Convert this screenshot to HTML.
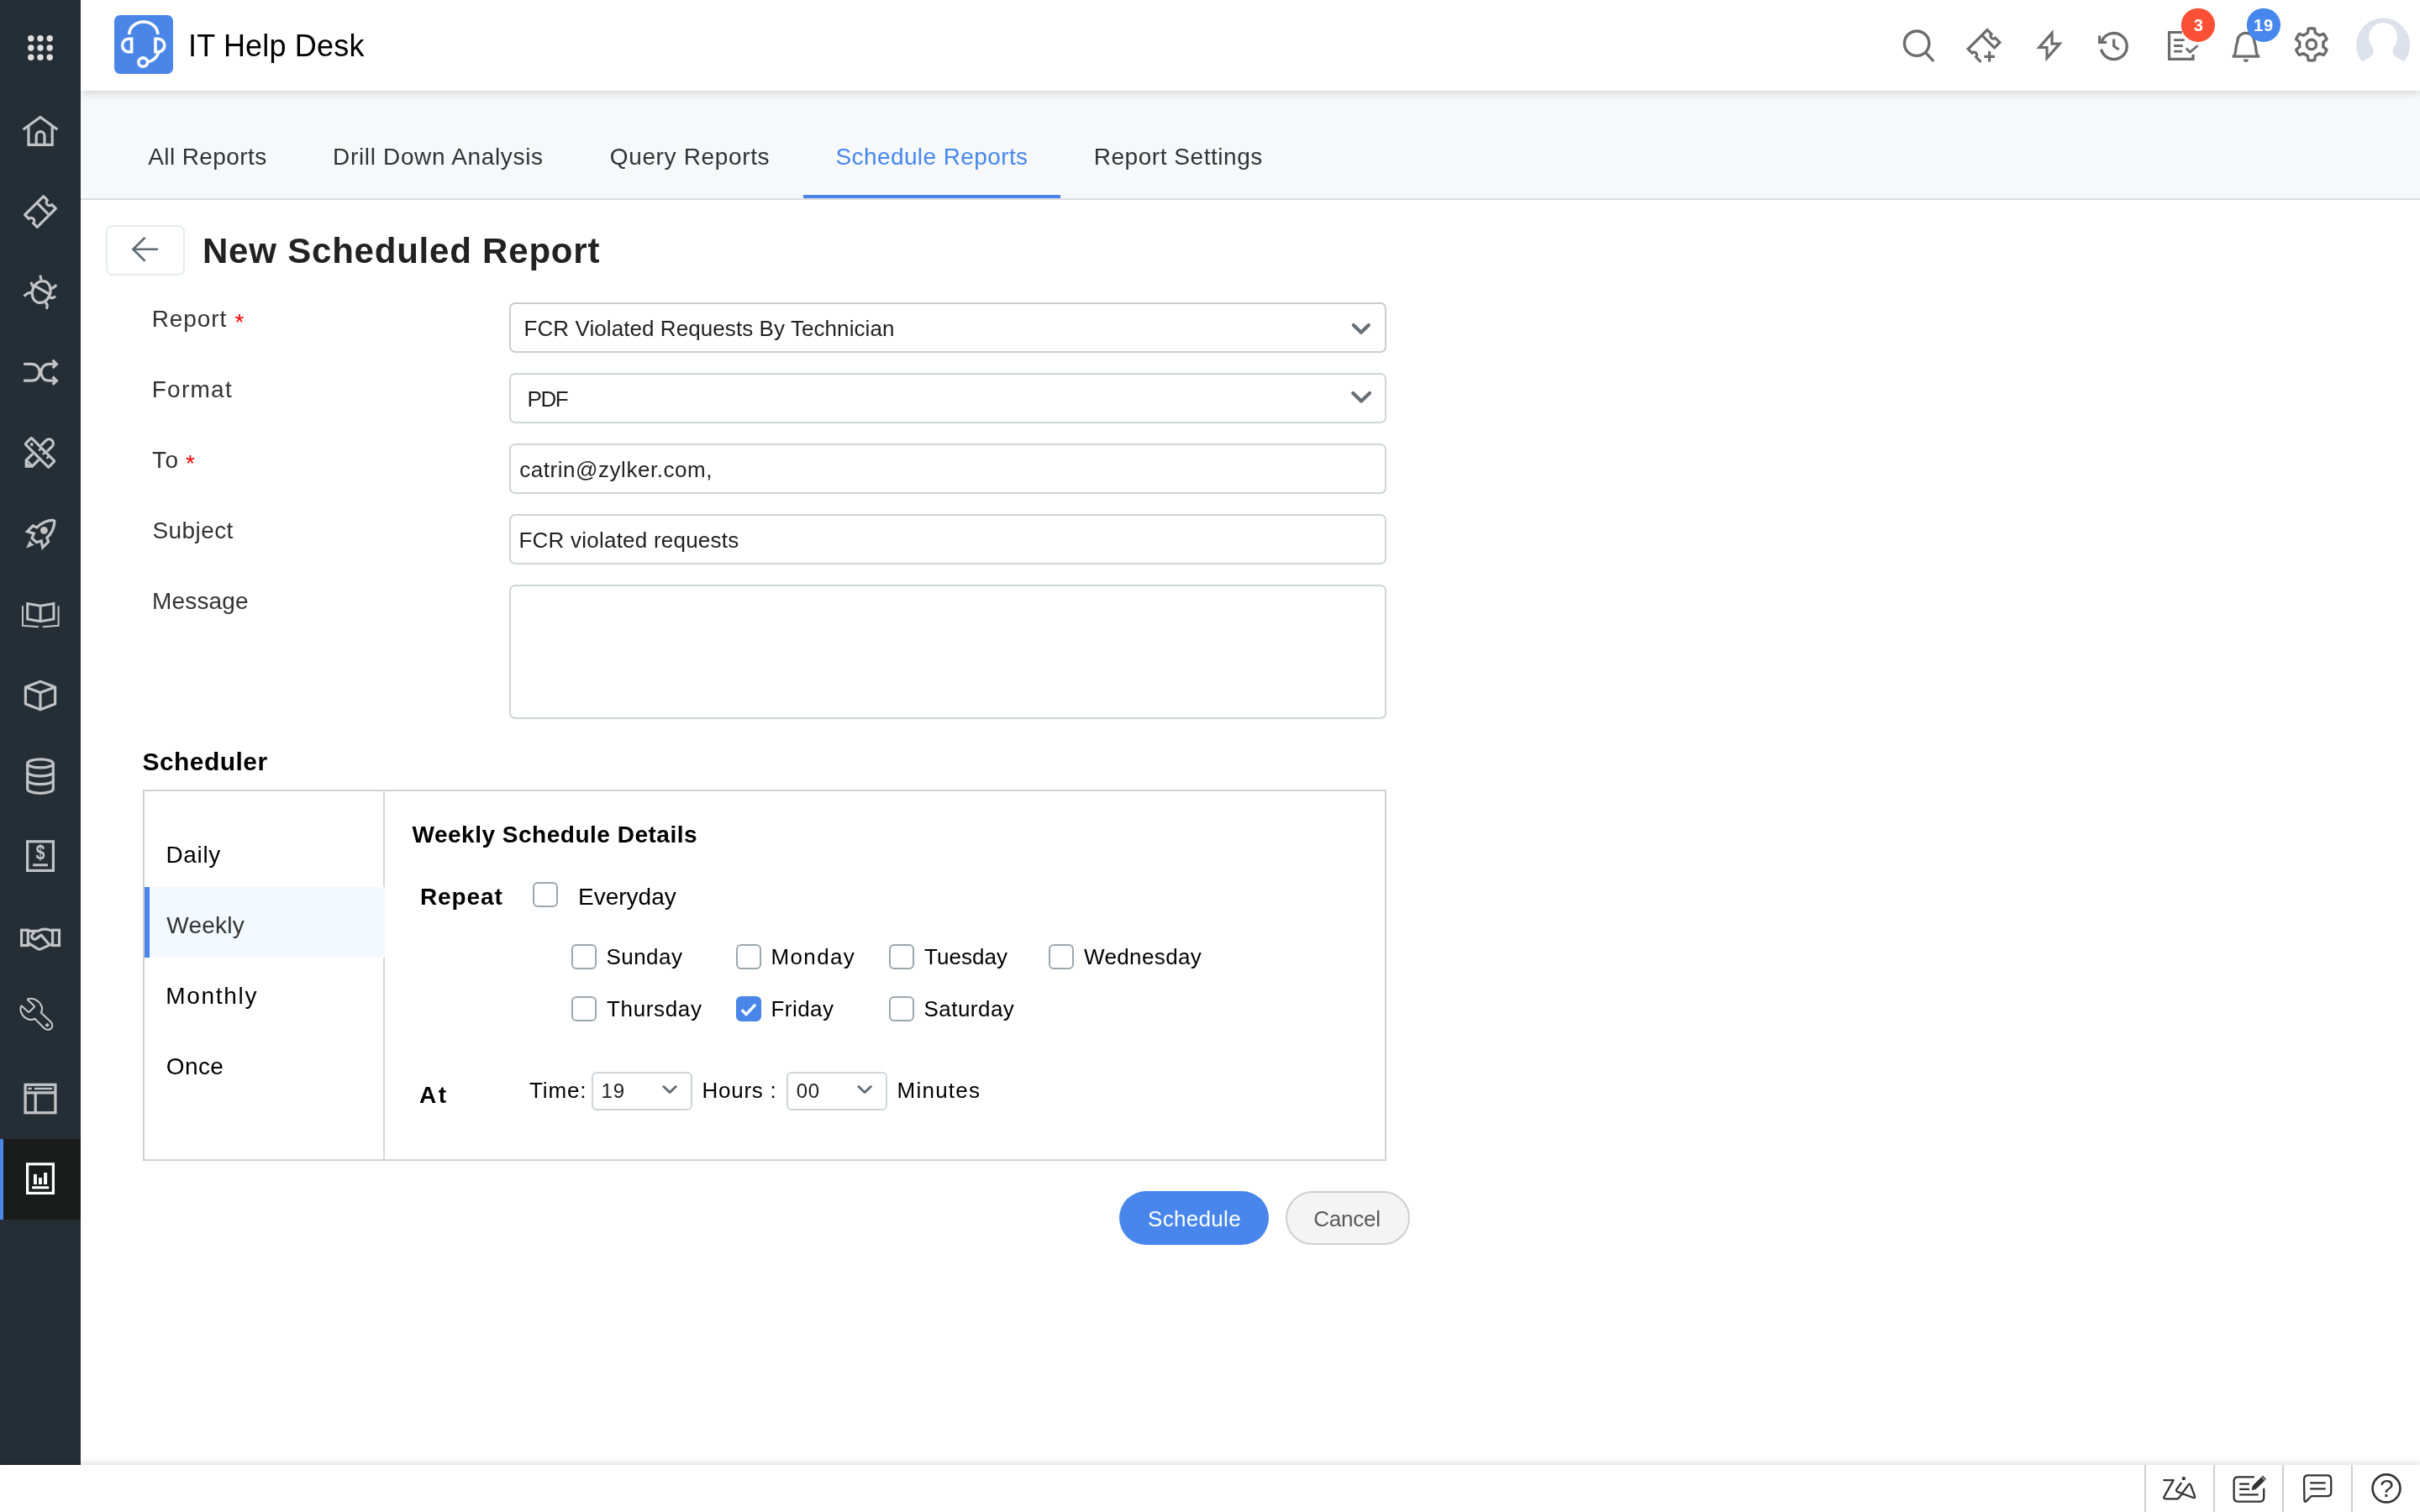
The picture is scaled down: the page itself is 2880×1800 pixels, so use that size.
<!DOCTYPE html>
<html lang="en"><head><meta charset="utf-8"><title>New Scheduled Report - IT Help Desk</title>
<style>
html,body{margin:0;padding:0;background:#fff;}
@media (max-width:2000px){html{zoom:.5}}
body{width:2880px;height:1800px;overflow:hidden;font-family:"Liberation Sans",sans-serif;}
#page{position:relative;width:2880px;height:1800px;overflow:hidden;background:#fff;}
#page>*{position:absolute;box-sizing:border-box;}
#txt{left:0;top:0;width:2880px;height:1800px;will-change:transform;pointer-events:none;}
.t{position:absolute;white-space:nowrap;display:block;}
#sidebar{left:0;top:0;width:96px;height:1744px;background:#252d35;}
#sideactive{left:0;top:1356px;width:96px;height:96px;background:#1a1c1c;border-left:4px solid #4a86e8;}
#tabbar{left:96px;top:108px;width:2784px;height:130px;background:#f7f8fa;border-bottom:2px solid #dcdddf;}
#header{left:96px;top:0;width:2784px;height:108px;background:#fff;box-shadow:0 2px 10px rgba(0,0,0,.16);}
#tabline{left:956px;top:232px;width:306px;height:4px;background:#4a86e8;}
#logo{left:136px;top:18px;width:70px;height:70px;border-radius:7px;background:#4a86e8;}
#back{left:126px;top:268px;width:94px;height:60px;border:2px solid #e9ebed;border-radius:8px;background:#fff;}
.inp{left:606px;width:1044px;height:60px;border:2px solid #cdd5d9;border-radius:7px;background:#fff;}
#i1{top:360px;border-color:#ccc}#i2{top:444px}#i3{top:528px}#i4{top:612px}
#i5{top:696px;height:160px}
#sbox{left:170px;top:940px;width:1480px;height:442px;border:2px solid #cfd1d4;background:#fff;}
#sdiv{left:456px;top:942px;width:2px;height:438px;background:#d5d7da;}
#wsel{left:172px;top:1056px;width:286px;height:84px;background:#f2f9ff;border-left:6px solid #4a86e8;}
.cb{width:30px;height:30px;border:2px solid #9ba7ad;border-radius:6px;background:#fff;}
.cb.on{background:#4a86e8;border-color:#4a86e8;}
.sel{width:120px;height:46px;top:1276px;border:2px solid #cdd5d9;border-radius:6px;background:#fff;}
#bsch{left:1332px;top:1418px;width:178px;height:64px;border-radius:32px;background:#4886ec;}
#bcan{left:1530px;top:1418px;width:148px;height:64px;border-radius:32px;background:#f4f4f4;border:2px solid #cfcfcf;}
#footer{left:0;top:1744px;width:2880px;height:56px;background:#fff;box-shadow:0 -2px 8px rgba(0,0,0,.14);}
.fdiv{top:1744px;width:2px;height:56px;background:#cfcfcf;}
svg{position:absolute;overflow:visible;}

</style></head>
<body>
<div id="page">
<div id="tabbar"></div>
<div id="header"></div>
<div id="sidebar"></div>
<div id="sideactive"></div>
<div id="tabline"></div>
<div id="logo"></div>
<div id="back"></div>
<div class="inp" id="i1"></div>
<div class="inp" id="i2"></div>
<div class="inp" id="i3"></div>
<div class="inp" id="i4"></div>
<div class="inp" id="i5"></div>
<div id="sbox"></div>
<div id="sdiv"></div>
<div id="wsel"></div>
<div class="cb" style="left:634px;top:1050px"></div>
<div class="cb" style="left:680px;top:1124px"></div>
<div class="cb" style="left:876px;top:1124px"></div>
<div class="cb" style="left:1058px;top:1124px"></div>
<div class="cb" style="left:1248px;top:1124px"></div>
<div class="cb" style="left:680px;top:1186px"></div>
<div class="cb on" style="left:876px;top:1186px"></div>
<div class="cb" style="left:1058px;top:1186px"></div>
<div class="sel" style="left:704px"></div>
<div class="sel" style="left:936px"></div>
<div id="bsch"></div>
<div id="bcan"></div>
<div id="footer"></div>
<div class="fdiv" style="left:2552px"></div>
<div class="fdiv" style="left:2634px"></div>
<div class="fdiv" style="left:2716px"></div>
<div class="fdiv" style="left:2798px"></div>

<svg id="ico" width="2880" height="1800" viewBox="0 0 2880 1800" style="left:0;top:0;pointer-events:none;will-change:transform" fill="none" stroke-linecap="butt" stroke-linejoin="miter">
<!-- ===== sidebar icons ===== -->
<g fill="#e0e0e0" stroke="none">
<circle cx="36.8" cy="45.8" r="3.7"/><circle cx="48" cy="45.8" r="3.7"/><circle cx="59.2" cy="45.8" r="3.7"/>
<circle cx="36.8" cy="57" r="3.7"/><circle cx="48" cy="57" r="3.7"/><circle cx="59.2" cy="57" r="3.7"/>
<circle cx="36.8" cy="68.2" r="3.7"/><circle cx="48" cy="68.2" r="3.7"/><circle cx="59.2" cy="68.2" r="3.7"/>
</g>
<g stroke="#c1c3c5" stroke-width="3.2">
<!-- home -->
<path d="M27.6 154.2 L48 139.4 L68.4 154.2"/>
<path d="M34 150 V172.4 H62.2 V150"/>
<path d="M43.2 172.4 V161.6 a4.9 4.9 0 0 1 9.8 0 V172.4"/>
<!-- ticket -->
<g transform="translate(48 252) rotate(-45)">
<path d="M-15.6 -10.3 H15.6 V-3.8 A3.8 3.8 0 0 0 15.6 3.8 V10.3 H-15.6 V3.8 A3.8 3.8 0 0 0 -15.6 -3.8 Z" stroke-linejoin="round"/>
<path d="M4.6 -10.3 V10.3"/>
</g>
<!-- bug -->
<g transform="translate(48 347.5)">
<ellipse cx="1.2" cy="0" rx="10.6" ry="13.2" transform="rotate(20 1.2 0)"/>
<path d="M-6.4 -7.2 L10.6 2.6"/>
<path d="M-0.4 -19.8 Q1 -17 0.9 -14"/>
<path d="M-11.2 -11.6 Q-10 -8.5 -8.6 -6.2"/>
<path d="M-19.4 5.2 Q-15 0.4 -9.9 0.6"/>
<path d="M19.3 -8.4 Q15.5 -4.4 12.6 -4.2"/>
<path d="M18 5.2 Q14.5 8.6 11 6.4"/>
<path d="M6 12.2 Q9.4 15 7.4 20.4"/>
</g>
<!-- shuffle -->
<g transform="translate(48 443.3)">
<path d="M-19.8 -9.9 H-10.5 C-3.5 -9.9 -0.9 -4.5 -0.9 0 C-0.9 4.5 -3.5 9.9 -10.5 9.9 H-19.8"/>
<path d="M18.6 -9.9 H10.5 C3.5 -9.9 0.9 -4.5 0.9 0 C0.9 4.5 3.5 9.9 10.5 9.9 H18.6"/>
<path d="M14.6 -14.6 L19.3 -9.9 L14.6 -5.2"/>
<path d="M14.6 5.2 L19.3 9.9 L14.6 14.6"/>
</g>
<!-- design: ruler + pencil -->
<g transform="translate(47.5 538.8)">
<g transform="rotate(-45)">
<path d="M6.9 -5.05 H15.3 A5.05 5.05 0 0 1 15.3 5.05 H6.9"/>
<path d="M-6.9 -5.05 H-18 L-23 0 L-18 5.05 H-6.9"/>
<path d="M-17.6 -5.05 V5.05" stroke-width="2.4"/>
<path d="M-21.4 0 L-19.2 -2.2 V2.2 Z" fill="#c1c3c5" stroke="none"/>
</g>
<g transform="rotate(45)">
<rect x="-19.6" y="-5.2" width="39.2" height="10.4" rx="1"/>
<path d="M-2.6 -5.2 V-0.8 M4 -5.2 V-0.8 M10.6 -5.2 V-0.8" stroke-width="2.6"/>
<circle cx="-13.8" cy="0" r="1.9" fill="#c1c3c5" stroke="none"/>
</g>
</g>
<!-- rocket -->
<path d="M43.9 627.9 C49 622.5 57 619 63.2 619.4 Q65 619.6 64.8 621.6 C64.6 628 61 636 55.8 640 L57.7 644.9 L50.7 651.8 L49.2 643.8 L43.5 645.7 L38 640.6 L40.3 635.1 L32.5 632.8 L39.1 626 Z"/>
<circle cx="52.4" cy="631.3" r="4.4" fill="#c1c3c5" stroke="none"/>
<path d="M31 652.7 L35.5 642.9 Q37 647 41 648.4 Z" fill="#c1c3c5" stroke="none"/>
<!-- book -->
<g transform="translate(48.3 731.5)">
<path d="M-0.2 -10.2 L-15.6 -13 V5.6 L-0.2 8.2 L15.6 5.6 V-13 L-0.2 -10.2 V8.2" stroke-width="3"/>
<path d="M-21.3 -10.2 V13.3 L-2.4 14.7" stroke-width="2"/>
<path d="M21.3 -10.2 V13.3 L2.4 14.7" stroke-width="2"/>
</g>
<!-- cube -->
<g transform="translate(48 828)" stroke-linejoin="round">
<path d="M0 -16.8 L17.6 -10 V10 L0 16.8 L-17.6 10 V-10 Z"/>
<path d="M-17.6 -10 L0 -3.4 L17.6 -10 M0 -3.4 V16.8"/>
</g>
<!-- database -->
<g transform="translate(48 924.1)">
<ellipse cx="0" cy="-15.2" rx="15.3" ry="5"/>
<path d="M-15.3 -15.2 V15.2 A15.3 5 0 0 0 15.3 15.2 V-15.2"/>
<path d="M-15.3 -5.2 A15.3 5 0 0 0 15.3 -5.2"/>
<path d="M-15.3 4.6 A15.3 5 0 0 0 15.3 4.6"/>
</g>
<!-- dollar box -->
<g transform="translate(48 1019.1)">
<rect x="-15.4" y="-17.3" width="30.8" height="34.6"/>
<path d="M-8.9 10.7 H8.9" stroke-width="3"/>
<text x="0.1" y="3.4" transform="scale(0.86 1)" font-family="Liberation Sans, sans-serif" font-size="23" font-weight="700" text-anchor="middle" fill="#c1c3c5" stroke="none">$</text>
</g>
<!-- handshake -->
<rect x="25.6" y="1107.2" width="7.7" height="18.3"/>
<rect x="62.6" y="1107.2" width="7.9" height="18.3"/>
<path d="M33.3 1108.4 H45.2 C49 1106.3 53.3 1105.5 57.5 1106.7 L62.6 1108.2"/>
<path d="M33.3 1122.4 L45 1129.6 Q47 1130.6 49 1129.6 L62.6 1123.4"/>
<path d="M41.4 1109.8 C38.5 1111.5 36.5 1114.5 38.6 1116.8 C40 1118.6 42 1118.5 43 1117.6 L49 1113.1 L58.4 1124.3" stroke-linejoin="round"/>
<!-- wrench -->
<g stroke-width="2.1" stroke="#c4c6c8" stroke-linejoin="round">
<path d="M33.6 1189.2 C39 1187.6 46 1190.6 49 1196.8 C50.6 1200 50.2 1203.2 48.8 1205.5 L60.4 1216.5 C63.6 1219.6 62.6 1223.4 60 1225 C57 1226.8 54 1225.6 52 1223.5 L41.4 1212.7 C37 1215 31.6 1213.8 28.2 1210 C25 1206.4 24 1201.6 24.8 1198.6 Q25.2 1197 26.4 1198 L33.4 1204.6 Q34.2 1205.4 35 1204.6 L40.6 1199 Q41.4 1198.2 40.6 1197.4 L33.2 1190.4 Q32.4 1189.6 33.6 1189.2 Z"/>
<circle cx="56.2" cy="1220.3" r="2.1" fill="#c4c6c8" stroke="none"/>
</g>
<!-- layout -->
<g transform="translate(48 1308)">
<rect x="-17.9" y="-16.7" width="35.8" height="33.4" stroke-width="3.3"/>
<path d="M-17.9 -7.1 H17.9 M-5.8 -7.1 V16.7" stroke-width="3.3"/>
<path d="M-14.7 -12 H-10.2 M-7.1 -12 H14.2" stroke-width="2.6"/>
</g>
</g>
<!-- reports (active, white) -->
<g transform="translate(48 1403.1)" stroke="#fff" stroke-width="3.2">
<rect x="-15.4" y="-17.3" width="30.8" height="34.6"/>
<path d="M-9.9 10.7 H10.2" stroke-width="3.1"/>
<g fill="#fff" stroke="none"><rect x="-8" y="-5.2" width="3.9" height="12.1"/><rect x="-2" y="-1.1" width="3.9" height="8"/><rect x="4.1" y="-7.1" width="4" height="14"/></g>
</g>

<!-- ===== logo headset ===== -->
<g stroke="#fff" stroke-width="3.6">
<path d="M153.8 40.9 A17 14.9 0 0 1 187.8 40.9"/>
<path d="M156.6 46.2 H153 A7.4 7.75 0 0 0 153 61.7 H156.6 Z"/>
<path d="M185 46.2 H188.4 A7.4 7.75 0 0 1 188.4 61.7 H185 Z"/>
<path d="M188.9 62 C187 68 183.5 72 176.4 73.6"/>
<ellipse cx="170.2" cy="74.1" rx="5.4" ry="5.2"/>
</g>

<!-- ===== back arrow ===== -->
<path d="M172.6 282.8 L158.4 296.8 L172.6 310.8 M158.4 296.8 H188" stroke="#5f6b74" stroke-width="2.6"/>

<!-- ===== select chevrons ===== -->
<path d="M1610.8 387 L1619.8 395.8 L1628.8 387" stroke="#676f77" stroke-width="4.2" stroke-linecap="round" stroke-linejoin="round"/>
<path d="M1610.2 467.9 L1620 477.6 L1630 467.9" stroke="#676f77" stroke-width="4.2" stroke-linecap="round" stroke-linejoin="round"/>
<path d="M789.8 1293.6 L797.1 1300.6 L804.4 1293.6" stroke="#5f6b74" stroke-width="2.8" stroke-linecap="round" stroke-linejoin="round"/>
<path d="M1021.8 1293.6 L1029.1 1300.6 L1036.4 1293.6" stroke="#5f6b74" stroke-width="2.8" stroke-linecap="round" stroke-linejoin="round"/>
<!-- checkmark -->
<path d="M882.8 1202.3 L888 1207.6 L899 1195.9" stroke="#fff" stroke-width="3.4"/>

<!-- ===== header icons ===== -->
<g stroke="#6c6c6c" stroke-width="3.4">
<!-- search -->
<circle cx="2281.1" cy="51.7" r="14.7"/>
<path d="M2291.6 62.6 L2300.3 71.8" stroke-linecap="round"/>
<!-- ticket plus -->
<g stroke-width="3.2">
<path d="M2374.2 57.6 L2358.4 41.7"/>
<path d="M2357.6 73.8 L2351.6 67.8 A3.3 3.3 0 0 0 2346.9 63.1 L2342.2 58.3 L2365 35.6 L2369.9 40.5 A3.3 3.3 0 0 0 2374.6 45.2 L2379.9 50.5 L2372.8 57.6"/>
<path d="M2367.6 61 V73.6 M2361.3 67.3 H2373.9"/>
</g>
<!-- bolt -->
<path d="M2442 39.4 L2426.9 56.5 H2436 V69.2 L2451.1 52.05 H2442 Z" stroke-width="3.2"/>
<!-- history -->
<path d="M2500.6 58.6 A15.5 15.5 0 1 0 2501.4 49"/>
<path d="M2498.6 42.4 V50.3 H2507.1" stroke-width="3.2"/>
<path d="M2515.7 46.4 V55 L2521.7 59" stroke-width="3.2"/>
<!-- tasks -->
<g stroke-width="3.2">
<path d="M2597 38.5 H2581.5 V70.3 H2610 V64.8"/>
<path d="M2587.1 47.6 H2599.7 M2587.1 54.5 H2597.7 M2587.1 61.1 H2597" stroke-width="2.9"/>
<path d="M2601.7 57.5 L2606.3 62.1 L2615.5 54.2" stroke-width="2.8"/>
</g>
<!-- bell -->
<g stroke-width="3.2">
<path d="M2656.6 67.2 H2689.2"/>
<path d="M2658.6 67.2 C2660.6 64 2660.8 60 2661.2 55 L2662.8 49.3 A10 10 0 0 1 2682.8 49.3 L2684.4 55 C2684.8 60 2685 64 2687 67.2"/>
<path d="M2669.8 70.6 H2675.8 A3 3.4 0 0 1 2669.8 70.6 Z" fill="#6c6c6c" stroke="none"/>
</g>
<!-- gear -->
<circle cx="2750.8" cy="52.9" r="5.7"/>
<path stroke-linejoin="round" d="M2746.2 39.5 L2747.1 34.1 A19.2 19.2 0 0 1 2754.5 34.1 L2755.4 39.5 A14.2 14.2 0 0 1 2760.1 42.2 L2765.3 40.3 A19.2 19.2 0 0 1 2769.0 46.6 L2764.7 50.2 A14.2 14.2 0 0 1 2764.7 55.6 L2769.0 59.2 A19.2 19.2 0 0 1 2765.3 65.5 L2760.1 63.6 A14.2 14.2 0 0 1 2755.4 66.3 L2754.5 71.7 A19.2 19.2 0 0 1 2747.1 71.7 L2746.2 66.3 A14.2 14.2 0 0 1 2741.5 63.6 L2736.3 65.5 A19.2 19.2 0 0 1 2732.6 59.2 L2736.9 55.6 A14.2 14.2 0 0 1 2736.9 50.2 L2732.6 46.6 A19.2 19.2 0 0 1 2736.3 40.3 L2741.5 42.2 A14.2 14.2 0 0 1 2746.2 39.5 Z"/>
</g>
<!-- badges -->
<circle cx="2615.9" cy="29.8" r="20.1" fill="#fb4f36"/>
<circle cx="2693.9" cy="29.8" r="20.1" fill="#4787ed"/>
<!-- avatar silhouette -->
<g>
<circle cx="2836.1" cy="53.6" r="32" fill="#dce1eb"/>
<g fill="#fff">
<ellipse cx="2836.1" cy="44.6" rx="17" ry="17.6"/>
<path d="M2824.5 56 V63 C2824 66 2820 68 2816 70.5 C2812 73 2808 76 2805 80 L2801 90 H2871 L2867 80 C2864 76 2860 73 2856 70.5 C2852 68 2848 66 2847.7 63 V56 Z"/>
</g>
</g>

<!-- ===== footer icons ===== -->
<g stroke="#333" stroke-width="2.3" stroke-linecap="round" stroke-linejoin="round">
<!-- zia -->
<path d="M2575.3 1762.1 H2586.6 L2575.4 1782 Q2574.6 1784.2 2577 1784.4 H2590.6 Q2592.2 1784.4 2593.2 1783 L2604.4 1767.6 Q2606.2 1765.6 2607.2 1768.2 L2612 1781.4 Q2612.4 1783.6 2610.2 1783 L2591.2 1775.8 Q2589.4 1774.8 2590.4 1773 L2595.6 1765.8"/>
<circle cx="2598.8" cy="1760.1" r="2.2" fill="#333" stroke="none"/>
<!-- edit note -->
<path d="M2682 1758.4 H2663.4 Q2658.6 1758.4 2658.6 1763.2 V1782.8 Q2658.6 1787.6 2663.4 1787.6 H2689.4 Q2694.2 1787.6 2694.2 1782.8 V1772.6"/>
<path d="M2666 1766.7 H2676 M2666 1772.9 H2676 M2666 1779.3 H2686.8"/>
<path d="M2680.2 1773.3 L2681.4 1768.6 L2691.2 1758.8 L2694.8 1762.4 L2685 1772.2 Z" fill="#333" stroke-width="1"/>
<path d="M2692.6 1757.6 L2696 1761" stroke-width="1.6"/>
<!-- chat -->
<path d="M2747 1756.4 H2769.4 Q2774.2 1756.4 2774.2 1761.2 V1776.4 Q2774.2 1781.2 2769.4 1781.2 H2750.6 L2744.4 1787.4 Q2742.8 1788.6 2742.4 1786.4 L2742 1761.2 Q2742 1756.4 2747 1756.4 Z"/>
<path d="M2750 1765.3 H2766.8 M2750 1772.3 H2766.8"/>
<!-- help -->
<circle cx="2840" cy="1771.9" r="16.5" stroke-width="2.6"/>
<text x="2840.4" y="1782.2" font-family="Liberation Sans, sans-serif" font-size="30" font-weight="400" text-anchor="middle" fill="#333" stroke="none">?</text>
</g>
</svg>

<div id="txt">
<span class="t" id="t_brand" style="left:224.00px;top:37.23px;font-size:36px;line-height:36px;font-weight:400;color:#000;letter-spacing:0.182px;">IT Help Desk</span>
<span class="t" id="t_tab1" style="left:176.25px;top:172.55px;font-size:28px;line-height:28px;font-weight:400;color:#333;letter-spacing:0.400px;">All Reports</span>
<span class="t" id="t_tab2" style="left:396.00px;top:172.55px;font-size:28px;line-height:28px;font-weight:400;color:#333;letter-spacing:0.667px;">Drill Down Analysis</span>
<span class="t" id="t_tab3" style="left:725.75px;top:172.55px;font-size:28px;line-height:28px;font-weight:400;color:#333;letter-spacing:0.646px;">Query Reports</span>
<span class="t" id="t_tab4" style="left:994.50px;top:172.55px;font-size:28px;line-height:28px;font-weight:400;color:#4687ee;letter-spacing:0.400px;">Schedule Reports</span>
<span class="t" id="t_tab5" style="left:1301.75px;top:172.55px;font-size:28px;line-height:28px;font-weight:400;color:#333;letter-spacing:0.536px;">Report Settings</span>
<span class="t" id="t_title" style="left:241.00px;top:278.20px;font-size:42px;line-height:42px;font-weight:700;color:#222;letter-spacing:0.789px;">New Scheduled Report</span>
<span class="t" id="t_l1" style="left:180.75px;top:365.80px;font-size:28px;line-height:28px;font-weight:400;color:#333;letter-spacing:0.900px;">Report</span>
<span class="t" id="t_l2" style="left:180.75px;top:450.05px;font-size:28px;line-height:28px;font-weight:400;color:#333;letter-spacing:1.250px;">Format</span>
<span class="t" id="t_l3" style="left:181.00px;top:533.80px;font-size:28px;line-height:28px;font-weight:400;color:#333;letter-spacing:1.500px;">To</span>
<span class="t" id="t_l4" style="left:181.50px;top:618.30px;font-size:28px;line-height:28px;font-weight:400;color:#333;letter-spacing:0.417px;">Subject</span>
<span class="t" id="t_l5" style="left:181.00px;top:702.30px;font-size:28px;line-height:28px;font-weight:400;color:#333;letter-spacing:0.167px;">Message</span>
<span class="t" id="t_s1" style="left:279.50px;top:370.30px;font-size:28px;line-height:28px;font-weight:400;color:#f00;">*</span>
<span class="t" id="t_s2" style="left:221.00px;top:538.30px;font-size:28px;line-height:28px;font-weight:400;color:#f00;">*</span>
<span class="t" id="t_v1" style="left:623.50px;top:377.99px;font-size:26px;line-height:26px;font-weight:400;color:#222;letter-spacing:0.074px;">FCR Violated Requests By Technician</span>
<span class="t" id="t_v2" style="left:627.50px;top:462.24px;font-size:26px;line-height:26px;font-weight:400;color:#222;letter-spacing:-1.375px;">PDF</span>
<span class="t" id="t_v3" style="left:618.25px;top:545.99px;font-size:26px;line-height:26px;font-weight:400;color:#222;letter-spacing:0.544px;">catrin@zylker.com,</span>
<span class="t" id="t_v4" style="left:617.50px;top:630.24px;font-size:26px;line-height:26px;font-weight:400;color:#222;letter-spacing:0.225px;">FCR violated requests</span>
<span class="t" id="t_sch" style="left:169.50px;top:892.11px;font-size:30px;line-height:30px;font-weight:700;color:#000;letter-spacing:0.438px;">Scheduler</span>
<span class="t" id="t_m1" style="left:197.50px;top:1004.05px;font-size:28px;line-height:28px;font-weight:400;color:#000;letter-spacing:0.625px;">Daily</span>
<span class="t" id="t_m2" style="left:198.25px;top:1088.05px;font-size:28px;line-height:28px;font-weight:400;color:#333;letter-spacing:0.250px;">Weekly</span>
<span class="t" id="t_m3" style="left:197.25px;top:1172.05px;font-size:28px;line-height:28px;font-weight:400;color:#000;letter-spacing:1.708px;">Monthly</span>
<span class="t" id="t_m4" style="left:197.75px;top:1255.80px;font-size:28px;line-height:28px;font-weight:400;color:#000;letter-spacing:0.417px;">Once</span>
<span class="t" id="t_wsd" style="left:490.50px;top:980.05px;font-size:28px;line-height:28px;font-weight:700;color:#000;letter-spacing:0.511px;">Weekly Schedule Details</span>
<span class="t" id="t_rep" style="left:500.00px;top:1053.80px;font-size:28px;line-height:28px;font-weight:700;color:#000;letter-spacing:0.900px;">Repeat</span>
<span class="t" id="t_ev" style="left:688.00px;top:1053.80px;font-size:28px;line-height:28px;font-weight:400;color:#000;">Everyday</span>
<span class="t" id="t_d1" style="left:721.50px;top:1125.99px;font-size:26px;line-height:26px;font-weight:400;color:#000;letter-spacing:0.450px;">Sunday</span>
<span class="t" id="t_d2" style="left:917.50px;top:1125.99px;font-size:26px;line-height:26px;font-weight:400;color:#000;letter-spacing:1.350px;">Monday</span>
<span class="t" id="t_d3" style="left:1100.00px;top:1125.99px;font-size:26px;line-height:26px;font-weight:400;color:#000;letter-spacing:0.042px;">Tuesday</span>
<span class="t" id="t_d4" style="left:1290.00px;top:1125.99px;font-size:26px;line-height:26px;font-weight:400;color:#000;letter-spacing:0.375px;">Wednesday</span>
<span class="t" id="t_d5" style="left:722.00px;top:1187.99px;font-size:26px;line-height:26px;font-weight:400;color:#000;letter-spacing:0.643px;">Thursday</span>
<span class="t" id="t_d6" style="left:917.50px;top:1187.99px;font-size:26px;line-height:26px;font-weight:400;color:#000;letter-spacing:0.450px;">Friday</span>
<span class="t" id="t_d7" style="left:1099.50px;top:1187.99px;font-size:26px;line-height:26px;font-weight:400;color:#000;letter-spacing:0.464px;">Saturday</span>
<span class="t" id="t_at" style="left:499.00px;top:1289.55px;font-size:28px;line-height:28px;font-weight:700;color:#000;letter-spacing:2.600px;">At</span>
<span class="t" id="t_time" style="left:630.00px;top:1285.49px;font-size:26px;line-height:26px;font-weight:400;color:#000;letter-spacing:0.875px;">Time:</span>
<span class="t" id="t_19" style="left:715.50px;top:1287.18px;font-size:24px;line-height:24px;font-weight:400;color:#222;letter-spacing:1.000px;">19</span>
<span class="t" id="t_hours" style="left:835.50px;top:1285.49px;font-size:26px;line-height:26px;font-weight:400;color:#000;letter-spacing:0.750px;">Hours :</span>
<span class="t" id="t_00" style="left:947.75px;top:1287.18px;font-size:24px;line-height:24px;font-weight:400;color:#222;letter-spacing:0.750px;">00</span>
<span class="t" id="t_min" style="left:1067.50px;top:1285.49px;font-size:26px;line-height:26px;font-weight:400;color:#000;letter-spacing:1.250px;">Minutes</span>
<span class="t" id="t_bs" style="left:1366.00px;top:1437.99px;font-size:26px;line-height:26px;font-weight:400;color:#fff;letter-spacing:0.314px;">Schedule</span>
<span class="t" id="t_bc" style="left:1563.20px;top:1437.99px;font-size:26px;line-height:26px;font-weight:400;color:#595959;letter-spacing:-0.240px;">Cancel</span>
<span class="t" id="t_b3" style="left:2610.80px;top:19.97px;font-size:20px;line-height:20px;font-weight:700;color:#fff;">3</span>
<span class="t" id="t_b19" style="left:2682.00px;top:19.97px;font-size:20px;line-height:20px;font-weight:700;color:#fff;letter-spacing:1.000px;">19</span>
</div>
</div>
</body></html>
